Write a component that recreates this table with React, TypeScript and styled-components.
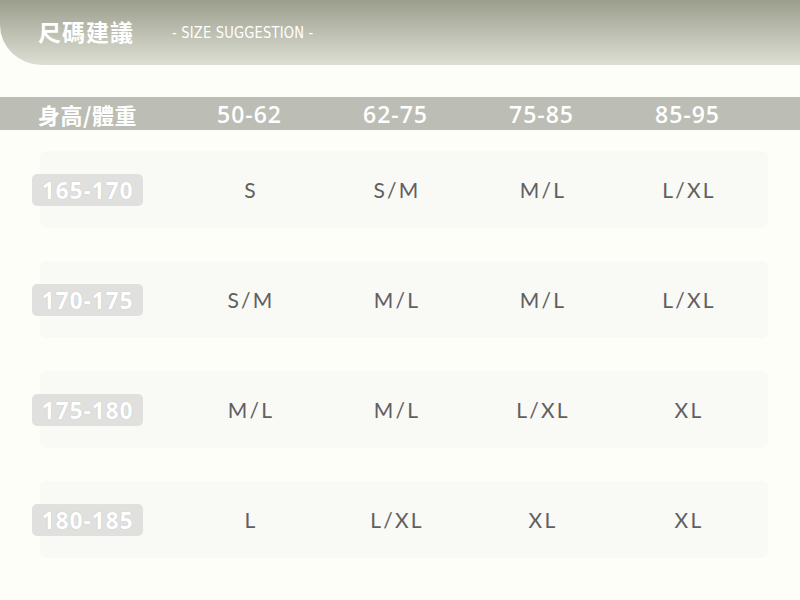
import React from 'react';
import styled, { createGlobalStyle } from 'styled-components';

const GlobalStyle = createGlobalStyle`
  html, body {
    margin: 0;
    padding: 0;
    background: #fefef9;
  }
  body {
    font-family: 'Open Sans', 'Noto Sans CJK TC', sans-serif;
  }
`;

const weights = ['50-62', '62-75', '75-85', '85-95'];

const rows = [
  { height: '165-170', sizes: ['S', 'S/M', 'M/L', 'L/XL'] },
  { height: '170-175', sizes: ['S/M', 'M/L', 'M/L', 'L/XL'] },
  { height: '175-180', sizes: ['M/L', 'M/L', 'L/XL', 'XL'] },
  { height: '180-185', sizes: ['L', 'L/XL', 'XL', 'XL'] },
];

const App = () => {
  return (
    <Page>
      <GlobalStyle />
      <Banner>
        <Title>尺碼建議</Title>
        <Subtitle>- SIZE SUGGESTION -</Subtitle>
      </Banner>

      <HeadRow>
        <HeadLabel>身高/體重</HeadLabel>
        {weights.map((w) => (
          <HeadCell key={w}>{w}</HeadCell>
        ))}
      </HeadRow>

      <Body>
        {rows.map((r) => (
          <Card key={r.height}>
            <Pill>{r.height}</Pill>
            {r.sizes.map((s, i) => (
              <SizeCell key={i}>{s}</SizeCell>
            ))}
          </Card>
        ))}
      </Body>
    </Page>
  );
};

export default App;

const Page = styled.div`
  width: 800px;
  height: 600px;
  overflow: hidden;
  background: #fefef9;
`;

const Banner = styled.div`
  height: 65px;
  display: flex;
  align-items: center;
  padding: 0 0 4px 38px;
  box-sizing: border-box;
  background: linear-gradient(180deg, #9b9e8d 0%, #c0c2b4 55%, #dddfd3 100%);
  border-bottom-left-radius: 42px 40px;
`;

const Title = styled.h1`
  margin: 0;
  font-family: 'Noto Sans CJK TC', sans-serif;
  font-size: 23px;
  font-weight: 700;
  color: #fff;
  letter-spacing: 1px;
`;

const Subtitle = styled.span`
  margin-left: 38px;
  margin-top: 2px;
  font-family: 'DejaVu Sans Condensed', 'Liberation Sans Narrow', Roboto, sans-serif;
  font-size: 14.5px;
  color: #fff;
  letter-spacing: 0.2px;
  transform: scaleY(1.1);
`;

const grid = `
  display: grid;
  grid-template-columns: 137px repeat(4, 146px);
  align-items: center;
`;

const HeadRow = styled.div`
  ${grid};
  margin-top: 32px;
  height: 33px;
  padding-left: 38px;
  background: #bcbdb4;
`;

const HeadLabel = styled.div`
  font-family: 'Noto Sans CJK TC', sans-serif;
  font-size: 22px;
  font-weight: 700;
  color: #fff;
  white-space: nowrap;
  letter-spacing: 0.5px;
`;

const HeadCell = styled.div`
  text-align: center;
  font-family: 'Open Sans', sans-serif;
  font-size: 23px;
  font-weight: 600;
  color: #fff;
  letter-spacing: 1px;
  padding-left: 3px;
`;

const Body = styled.div`
  display: flex;
  flex-direction: column;
  gap: 33px;
  padding: 21px 32px 0 40px;
`;

const Card = styled.div`
  ${grid};
  height: 77px;
  background: #f9f9f6;
  border-radius: 6px;
`;

const Pill = styled.div`
  margin-left: -8px;
  width: 111px;
  height: 32px;
  display: flex;
  align-items: center;
  justify-content: center;
  background: #e0e0df;
  border-radius: 5px;
  font-family: 'Open Sans', sans-serif;
  font-size: 23px;
  font-weight: 700;
  color: #fff;
  letter-spacing: 0.8px;
  text-shadow: 0 0 1px #b0b0b0;
`;

const SizeCell = styled.div`
  text-align: center;
  font-family: Lato, 'Open Sans', sans-serif;
  font-size: 21px;
  font-weight: 400;
  color: #606060;
  letter-spacing: 2.2px;
  padding-left: 2px;
`;
